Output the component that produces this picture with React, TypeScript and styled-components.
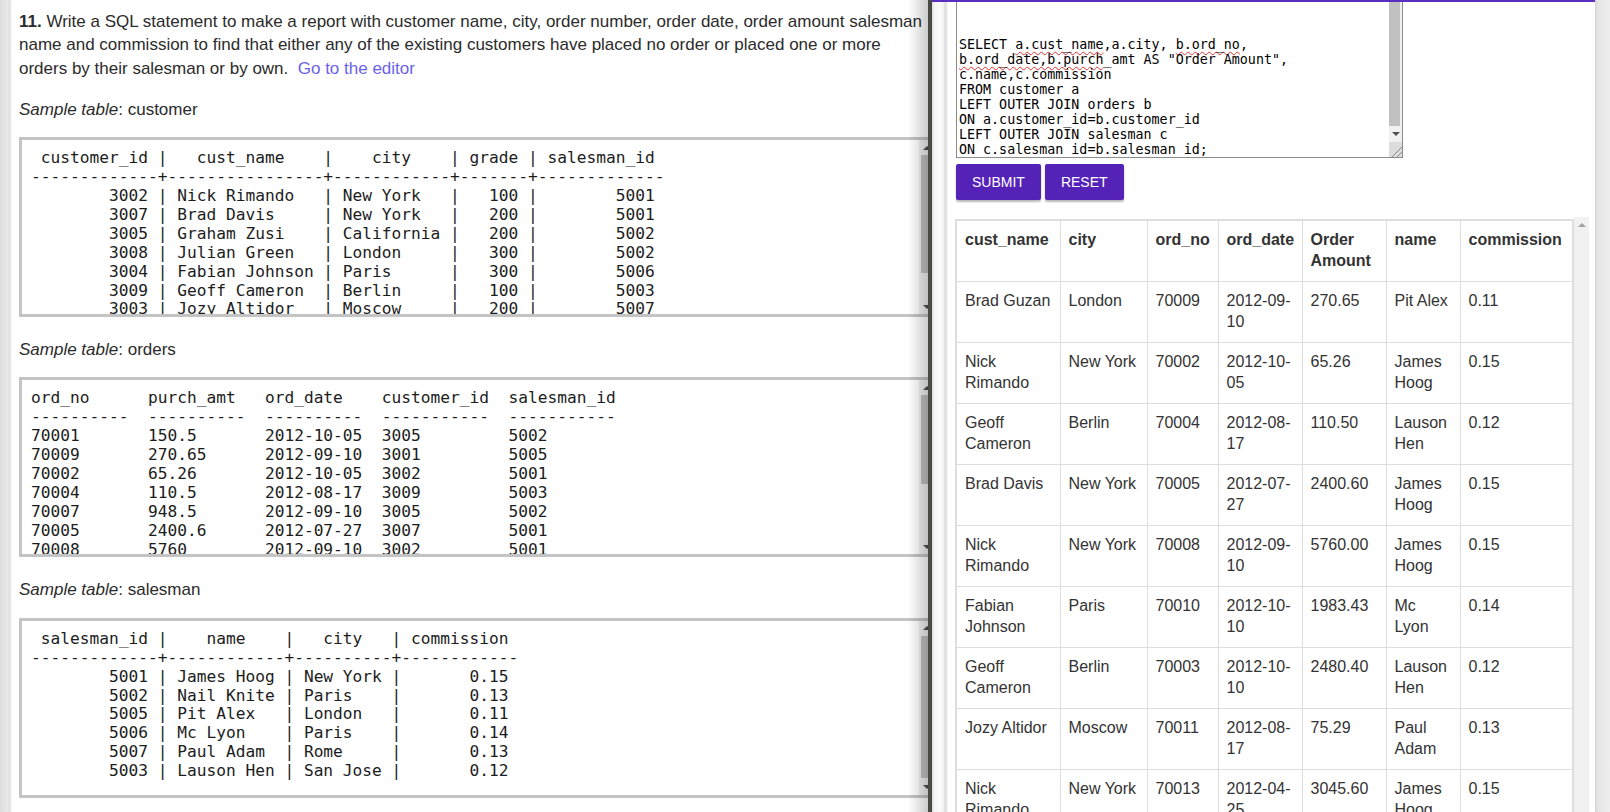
import React from "react";
import styled, { createGlobalStyle } from "styled-components";

const GlobalStyle = createGlobalStyle`
  html, body { margin: 0; padding: 0; overflow: hidden; background: #fff; }
  #root { height: 812px; }
`;

const Page = styled.div`
  display: flex;
  width: 1610px;
  height: 812px;
  overflow: hidden;
  font-family: "Liberation Sans", Arial, sans-serif;
`;

/* ---------- left pane ---------- */
const LeftPane = styled.div`
  position: relative;
  flex: 0 0 928px;
  box-sizing: border-box;
  overflow: hidden;
  padding: 10px 0 0 19px;
  color: #2b2b2b;
  font-size: 17px;
  line-height: 23.3px;
  background: linear-gradient(
    to right,
    #dedede 0,
    #e9e9e9 8px,
    #dcdcdc 10px,
    #f3f3f3 11px,
    #ffffff 12px
  );
  &::after {
    content: "";
    position: absolute;
    top: 0;
    right: 0;
    bottom: 0;
    width: 20px;
    pointer-events: none;
    background: linear-gradient(to right, rgba(0, 0, 0, 0), rgba(0, 0, 0, 0.2));
  }
`;

const Intro = styled.p`
  margin: 0 0 18px;
`;

const Num = styled.b`
  font-weight: bold;
`;

const EditorLink = styled.a`
  color: #6a62ee;
  text-decoration: none;
`;

const Label = styled.div`
  margin-bottom: 16px;
`;

const SampleBox = styled.div`
  display: flex;
  width: 918px;
  height: 180px;
  box-sizing: border-box;
  border: 3px solid #c4c4c4;
  margin-bottom: 21px;
  background: #fff;
`;

const Pre = styled.pre`
  flex: 1;
  min-width: 0;
  margin: 0;
  padding: 9px 9px 0;
  overflow: hidden;
  font-family: "DejaVu Sans Mono", "Liberation Mono", monospace;
  font-size: 16.2px;
  line-height: 18.9px;
  color: #1c1c1c;
`;

const VBar = styled.div<{ $w?: number }>`
  flex: 0 0 ${(p) => p.$w ?? 15}px;
  display: flex;
  flex-direction: column;
  background: #f1f1f1;
`;

const VTrack = styled.div<{ $offset: number }>`
  flex: 1;
  min-height: 0;
  box-sizing: border-box;
  padding-top: ${(p) => p.$offset}px;
`;

const VThumb = styled.div<{ $size: number }>`
  height: ${(p) => p.$size}px;
  margin: 0 2px;
  background: #c1c1c1;
`;

const ArrowBtn = styled.div<{ $h?: number }>`
  flex: 0 0 ${(p) => p.$h ?? 15}px;
  display: flex;
  align-items: center;
  justify-content: center;
`;

const Tri = styled.span<{ $dir: "up" | "down"; $color?: string }>`
  width: 0;
  height: 0;
  border-left: 4px solid transparent;
  border-right: 4px solid transparent;
  ${(p) =>
    p.$dir === "up"
      ? `border-bottom: 4px solid ${p.$color ?? "#505050"};`
      : `border-top: 4px solid ${p.$color ?? "#505050"};`}
`;

const Divider = styled.div`
  flex: 0 0 4px;
  background: #4a4a45;
`;

/* ---------- right pane ---------- */
const RightPane = styled.div`
  flex: 1;
  min-width: 0;
  display: flex;
`;

const Sheet = styled.div`
  flex: 0 0 663px;
  box-sizing: border-box;
  display: flex;
  flex-direction: column;
  overflow: hidden;
  border-top: 2px solid #5a2fc0;
  padding-left: 24px;
  background: linear-gradient(
    to right,
    #d9d9d9 0,
    #f4f4f4 2px,
    #fbfbfb 8px,
    #f0f0f0 12px,
    #d8d8d8 13px,
    #ececec 15px,
    #ffffff 16px
  );
`;

const Edge = styled.div`
  flex: 1;
  background: linear-gradient(to right, #d4d4d4 0, #e6e6e6 3px, #eeeeee 100%);
`;

const CodeBox = styled.div`
  flex: none;
  display: flex;
  width: 447px;
  height: 156px;
  box-sizing: border-box;
  border: 1px solid #8c8c8c;
  border-top: none;
  background: #fff;
`;

const Code = styled.div`
  flex: 1;
  min-width: 0;
  overflow: hidden;
  display: flex;
  flex-direction: column;
  justify-content: flex-end;
  padding: 0 2px 0;
  font-family: "DejaVu Sans Mono", monospace;
  font-size: 13.33px;
  line-height: 15px;
  color: #000;
`;

const CodeLine = styled.div`
  white-space: pre;
`;

const Squiggle = styled.span`
  text-decoration: underline wavy #e0322b;
  text-decoration-thickness: 1px;
  text-decoration-skip-ink: none;
  text-underline-offset: 2px;
`;

const AreaBar = styled.div`
  flex: 0 0 13px;
  display: flex;
  flex-direction: column;
  background: #f1f1f1;
`;

const AreaThumb = styled.div`
  flex: 1;
  margin-right: 2px;
  background: #c1c1c1;
`;

const Resizer = styled.div`
  flex: 0 0 15px;
  background:
    linear-gradient(
      135deg,
      transparent 62%,
      #8a8a8a 62%,
      #8a8a8a 67%,
      transparent 67%,
      transparent 80%,
      #8a8a8a 80%,
      #8a8a8a 85%,
      transparent 85%
    ),
    #dcdcdc;
`;

const ButtonRow = styled.div`
  flex: none;
  display: flex;
  gap: 4px;
  margin-top: 6px;
`;

const Btn = styled.button`
  height: 36px;
  padding: 0 16px;
  border: none;
  border-radius: 2px;
  background: #5522b8;
  color: #fff;
  font-family: "Liberation Sans", Arial, sans-serif;
  font-size: 14px;
  text-transform: uppercase;
  box-shadow: 0 2px 2px rgba(0, 0, 0, 0.28);
  cursor: pointer;
`;

const ResultWrap = styled.div`
  flex: 1;
  min-height: 0;
  display: flex;
  align-items: flex-start;
  margin: 17px 0 0 -1px;
  overflow: hidden;
`;

const Table = styled.table`
  flex: none;
  margin-top: 2px;
  width: 617px;
  table-layout: fixed;
  border-collapse: collapse;
  border: 2px solid #dddddd;
  font-size: 16px;
  line-height: 21px;
  color: #333;
`;

const Th = styled.th<{ $w: number }>`
  box-sizing: border-box;
  width: ${(p) => p.$w}px;
  padding: 8px 8px 10px;
  border: 1px solid #dddddd;
  text-align: left;
  vertical-align: top;
  font-weight: bold;
`;

const Td = styled.td`
  box-sizing: border-box;
  padding: 8px 8px 10px;
  border: 1px solid #dddddd;
  text-align: left;
  vertical-align: top;
`;

const TableBar = styled.div`
  flex: 0 0 15px;
  align-self: stretch;
  display: flex;
  flex-direction: column;
  background: #f1f1f1;
`;

/* ---------- data ---------- */
const customerText = [
  " customer_id |   cust_name    |    city    | grade | salesman_id",
  "-------------+----------------+------------+-------+-------------",
  "        3002 | Nick Rimando   | New York   |   100 |        5001",
  "        3007 | Brad Davis     | New York   |   200 |        5001",
  "        3005 | Graham Zusi    | California |   200 |        5002",
  "        3008 | Julian Green   | London     |   300 |        5002",
  "        3004 | Fabian Johnson | Paris      |   300 |        5006",
  "        3009 | Geoff Cameron  | Berlin     |   100 |        5003",
  "        3003 | Jozy Altidor   | Moscow     |   200 |        5007",
  "        3001 | Brad Guzan     | London     |       |        5005",
].join("\n");

const ordersText = [
  "ord_no      purch_amt   ord_date    customer_id  salesman_id",
  "----------  ----------  ----------  -----------  -----------",
  "70001       150.5       2012-10-05  3005         5002",
  "70009       270.65      2012-09-10  3001         5005",
  "70002       65.26       2012-10-05  3002         5001",
  "70004       110.5       2012-08-17  3009         5003",
  "70007       948.5       2012-09-10  3005         5002",
  "70005       2400.6      2012-07-27  3007         5001",
  "70008       5760        2012-09-10  3002         5001",
  "70010       1983.43     2012-10-10  3004         5006",
  "70003       2480.4      2012-10-10  3009         5003",
  "70012       250.45      2012-06-27  3008         5002",
  "70011       75.29       2012-08-17  3003         5007",
  "70013       3045.6      2012-04-25  3002         5001",
].join("\n");

const salesmanText = [
  " salesman_id |    name    |   city   | commission",
  "-------------+------------+----------+------------",
  "        5001 | James Hoog | New York |       0.15",
  "        5002 | Nail Knite | Paris    |       0.13",
  "        5005 | Pit Alex   | London   |       0.11",
  "        5006 | Mc Lyon    | Paris    |       0.14",
  "        5007 | Paul Adam  | Rome     |       0.13",
  "        5003 | Lauson Hen | San Jose |       0.12",
].join("\n");

const columns: { label: string; w: number }[] = [
  { label: "cust_name", w: 104 },
  { label: "city", w: 87 },
  { label: "ord_no", w: 71 },
  { label: "ord_date", w: 84 },
  { label: "Order Amount", w: 84 },
  { label: "name", w: 74 },
  { label: "commission", w: 113 },
];

const rows: string[][] = [
  ["Brad Guzan", "London", "70009", "2012-09-10", "270.65", "Pit Alex", "0.11"],
  ["Nick Rimando", "New York", "70002", "2012-10-05", "65.26", "James Hoog", "0.15"],
  ["Geoff Cameron", "Berlin", "70004", "2012-08-17", "110.50", "Lauson Hen", "0.12"],
  ["Brad Davis", "New York", "70005", "2012-07-27", "2400.60", "James Hoog", "0.15"],
  ["Nick Rimando", "New York", "70008", "2012-09-10", "5760.00", "James Hoog", "0.15"],
  ["Fabian Johnson", "Paris", "70010", "2012-10-10", "1983.43", "Mc Lyon", "0.14"],
  ["Geoff Cameron", "Berlin", "70003", "2012-10-10", "2480.40", "Lauson Hen", "0.12"],
  ["Jozy Altidor", "Moscow", "70011", "2012-08-17", "75.29", "Paul Adam", "0.13"],
  ["Nick Rimando", "New York", "70013", "2012-04-25", "3045.60", "James Hoog", "0.15"],
  ["Graham Zusi", "California", "70001", "2012-10-05", "150.50", "Nail Knite", "0.13"],
  ["Graham Zusi", "California", "70007", "2012-09-10", "948.50", "Nail Knite", "0.13"],
  ["Julian Green", "London", "70012", "2012-06-27", "250.45", "Nail Knite", "0.13"],
];

function Sample({ text, thumb }: { text: string; thumb: number }) {
  return (
    <SampleBox>
      <Pre>{text}</Pre>
      <VBar>
        <ArrowBtn>
          <Tri $dir="up" />
        </ArrowBtn>
        <VTrack $offset={0}>
          <VThumb $size={thumb} />
        </VTrack>
        <ArrowBtn>
          <Tri $dir="down" />
        </ArrowBtn>
      </VBar>
    </SampleBox>
  );
}

export default function App() {
  return (
    <>
      <GlobalStyle />
      <Page>
        <LeftPane>
          <Intro>
            <Num>11.</Num> Write a SQL statement to make a report with customer name, city,
            order number, order date, order amount salesman name and commission to find
            that either any of the existing customers have placed no order or placed one or
            more orders by their salesman or by own.{"\u00a0 "}
            <EditorLink href="#">Go to the editor</EditorLink>
          </Intro>
          <Label>
            <i>Sample table</i>: customer
          </Label>
          <Sample text={customerText} thumb={118} />
          <Label>
            <i>Sample table</i>: orders
          </Label>
          <Sample text={ordersText} thumb={89} />
          <Label>
            <i>Sample table</i>: salesman
          </Label>
          <Sample text={salesmanText} thumb={142} />
        </LeftPane>
        <Divider />
        <RightPane>
          <Sheet>
            <CodeBox>
              <Code>
                <CodeLine>
                  SELECT <Squiggle>a.cust_name</Squiggle>,a.city, <Squiggle>b.ord_no</Squiggle>,
                </CodeLine>
                <CodeLine>
                  <Squiggle>b.ord_date,b.purch</Squiggle>_amt AS "Order Amount",
                </CodeLine>
                <CodeLine>c.name,c.commission</CodeLine>
                <CodeLine>FROM customer a</CodeLine>
                <CodeLine>LEFT OUTER JOIN orders b</CodeLine>
                <CodeLine>ON a.customer_id=b.customer_id</CodeLine>
                <CodeLine>LEFT OUTER JOIN salesman c</CodeLine>
                <CodeLine>ON c.salesman_id=b.salesman_id;</CodeLine>
              </Code>
              <AreaBar>
                <AreaThumb />
                <ArrowBtn $h={16}>
                  <Tri $dir="down" />
                </ArrowBtn>
                <Resizer />
              </AreaBar>
            </CodeBox>
            <ButtonRow>
              <Btn>Submit</Btn>
              <Btn>Reset</Btn>
            </ButtonRow>
            <ResultWrap>
              <Table>
                <thead>
                  <tr>
                    {columns.map((c) => (
                      <Th key={c.label} $w={c.w}>
                        {c.label}
                      </Th>
                    ))}
                  </tr>
                </thead>
                <tbody>
                  {rows.map((r, i) => (
                    <tr key={i}>
                      {r.map((cell, j) => (
                        <Td key={j}>{cell}</Td>
                      ))}
                    </tr>
                  ))}
                </tbody>
              </Table>
              <TableBar>
                <ArrowBtn>
                  <Tri $dir="up" $color="#a3a3a3" />
                </ArrowBtn>
              </TableBar>
            </ResultWrap>
          </Sheet>
          <Edge />
        </RightPane>
      </Page>
    </>
  );
}
